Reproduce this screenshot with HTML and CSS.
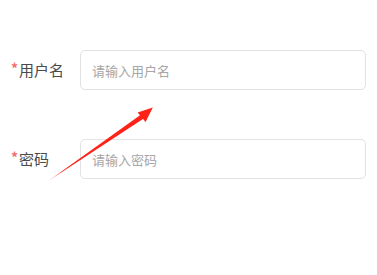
FILE: index.html
```html
<!DOCTYPE html>
<html lang="zh">
<head>
<meta charset="utf-8">
<link rel="stylesheet" href="styles.css">
</head>
<body>
<form class="form">
  <div class="row">
    <label class="label"><span class="req">*</span>用户名</label>
    <input class="input" type="text" placeholder="请输入用户名">
  </div>
  <div class="row">
    <label class="label"><span class="req">*</span>密码</label>
    <input class="input" type="password" placeholder="请输入密码">
  </div>
</form>
<svg class="arrow" width="377" height="275" viewBox="0 0 377 275">
  <defs>
    <linearGradient id="fade" x1="48" y1="181" x2="152" y2="108" gradientUnits="userSpaceOnUse">
      <stop offset="0" stop-color="#ff2218" stop-opacity="0.35"/>
      <stop offset="0.15" stop-color="#ff2218" stop-opacity="1"/>
      <stop offset="1" stop-color="#ff2218" stop-opacity="1"/>
    </linearGradient>
  </defs>
  <polygon fill="url(#fade)" points="47.5,181.5 140,115.2 137.6,112.4 152.8,107.4 145.6,122 143,118.9"/>
</svg>
</body>
</html>
```

FILE: styles.css
```css
html, body {
  margin: 0;
  padding: 0;
  background: #ffffff;
  width: 377px;
  height: 275px;
  overflow: hidden;
  font-family: "Noto Sans CJK SC", "Noto Sans", sans-serif;
}

.form {
  padding-top: 50px;
  display: flex;
  flex-direction: column;
  gap: 49px;
}

.row {
  display: flex;
  align-items: center;
}

.label {
  width: 80px;
  box-sizing: border-box;
  padding-left: 11px;
  font-size: 15px;
  color: #4a4a4a;
  line-height: 20px;
  display: flex;
  align-items: flex-start;
}

.req {
  color: #f56c6c;
  font-size: 14px;
  line-height: 14px;
  font-weight: bold;
  margin-right: 1px;
  margin-top: 1px;
}

.input {
  width: 286px;
  height: 40px;
  box-sizing: border-box;
  border: 1px solid #e2e2e2;
  border-radius: 5px;
  padding: 0 11px;
  font-family: "Noto Sans CJK SC", "Noto Sans", sans-serif;
  font-size: 13px;
  color: #333;
  background: #ffffff;
  outline: none;
}

.input::placeholder {
  color: #a6a6a6;
}

.arrow {
  position: absolute;
  left: 0;
  top: 0;
  pointer-events: none;
}
```
